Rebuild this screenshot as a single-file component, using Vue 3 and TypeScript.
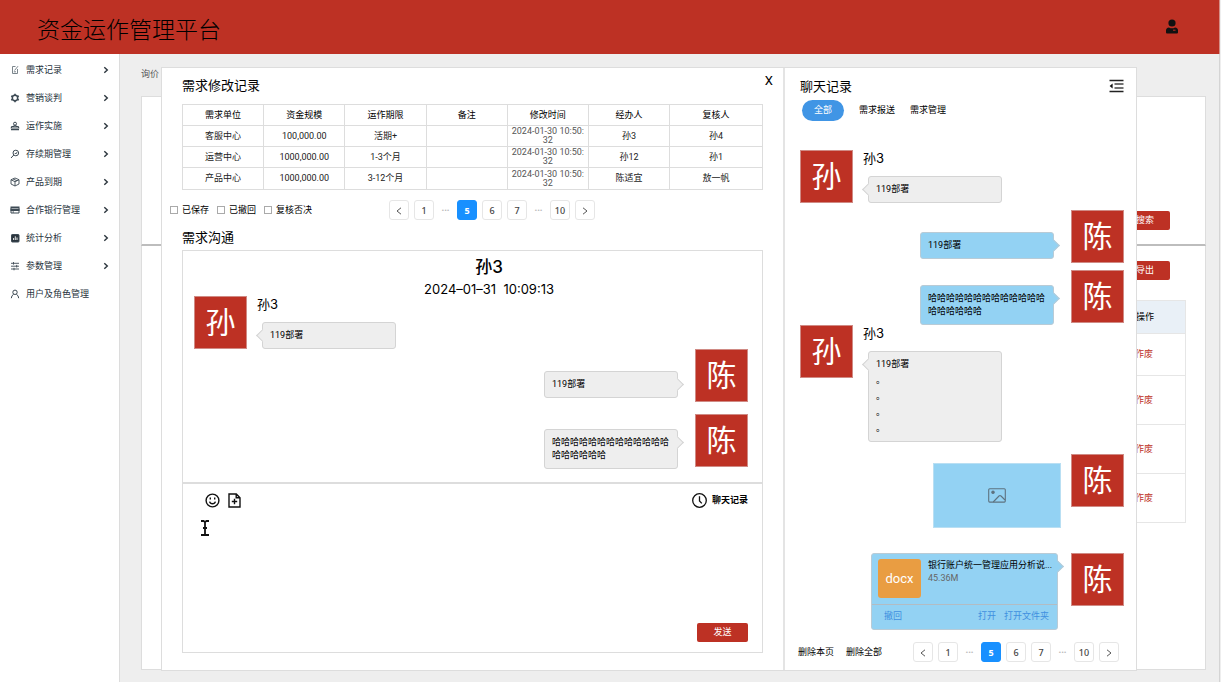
<script setup lang="ts">
import { ref } from 'vue'

interface MenuItem {
  label: string
  icon: string
  expandable: boolean
}

interface RecordRow {
  unit: string
  amount: string
  term: string
  remark: string
  time: string
  operator: string
  reviewer: string
}

interface Message {
  id: number
  kind: 'text' | 'image' | 'file'
  mine: boolean
  author: string
  avatar: string
  lines: string[]
  gap: string
  drop: string
}

const menu: MenuItem[] = [
  { label: '需求记录', icon: 'note', expandable: true },
  { label: '营销谈判', icon: 'gear', expandable: true },
  { label: '运作实施', icon: 'stamp', expandable: true },
  { label: '存续期管理', icon: 'search', expandable: true },
  { label: '产品到期', icon: 'box', expandable: true },
  { label: '合作银行管理', icon: 'card', expandable: true },
  { label: '统计分析', icon: 'chart', expandable: true },
  { label: '参数管理', icon: 'sliders', expandable: true },
  { label: '用户及角色管理', icon: 'user', expandable: false },
]

const columns = ['需求单位', '资金规模', '运作期限', '备注', '修改时间', '经办人', '复核人']

const records: RecordRow[] = [
  { unit: '客服中心', amount: '100,000.00', term: '活期+', remark: '', time: '2024-01-30 10:50:32', operator: '孙3', reviewer: '孙4' },
  { unit: '运营中心', amount: '1000,000.00', term: '1-3个月', remark: '', time: '2024-01-30 10:50:32', operator: '孙12', reviewer: '孙1' },
  { unit: '产品中心', amount: '1000,000.00', term: '3-12个月', remark: '', time: '2024-01-30 10:50:32', operator: '陈适宜', reviewer: '敖一帆' },
]

const filters = ['已保存', '已撤回', '复核否决']
const pages = ['prev', '1', 'dots', '5', '6', '7', 'dots', '10', 'next']
const laugh = '哈'.repeat(19)

const dialog: Message[] = [
  { id: 1, kind: 'text', mine: false, author: '孙3', avatar: '孙', lines: ['119部署'], gap: 'gap-none', drop: 'drop-none' },
  { id: 2, kind: 'text', mine: true, author: '', avatar: '陈', lines: ['119部署'], gap: 'gap-none', drop: 'drop-large' },
  { id: 3, kind: 'text', mine: true, author: '', avatar: '陈', lines: [laugh], gap: 'gap-medium', drop: 'drop-medium' },
]

const history: Message[] = [
  { id: 1, kind: 'text', mine: false, author: '孙3', avatar: '孙', lines: ['119部署'], gap: 'gap-none', drop: 'drop-none' },
  { id: 2, kind: 'text', mine: true, author: '', avatar: '陈', lines: ['119部署'], gap: 'gap-small', drop: 'drop-large' },
  { id: 3, kind: 'text', mine: true, author: '', avatar: '陈', lines: [laugh], gap: 'gap-small', drop: 'drop-medium' },
  { id: 4, kind: 'text', mine: false, author: '孙3', avatar: '孙', lines: ['119部署', '。', '。', '。', '。'], gap: 'gap-none', drop: 'drop-none' },
  { id: 5, kind: 'image', mine: true, author: '', avatar: '陈', lines: [], gap: 'gap-medium', drop: 'drop-small' },
  { id: 6, kind: 'file', mine: true, author: '', avatar: '陈', lines: [], gap: 'gap-large', drop: 'drop-none' },
]

const tabs = ['全部', '需求报送', '需求管理']
const activeTab = ref('全部')
const current = ref('5')
const draft = ref('')
</script>

<template>
  <div class="app">
    <header class="topbar">
      <h1>资金运作管理平台</h1>
      <button class="plain account" aria-label="账户">
        <svg width="14" height="16" viewBox="0 0 14 16">
          <circle cx="7" cy="4" r="3.6" fill="#111" />
          <path d="M1 11.5Q1 8.8 4 8.5Q7 10.2 10 8.5Q13 8.8 13 11.5V13.5Q13 14.5 12 14.5H2Q1 14.5 1 13.5Z" fill="#111" />
          <path d="M8 11.2H10.5" stroke="#bd3124" stroke-width="1" />
        </svg>
      </button>
    </header>

    <div class="body">
      <nav class="sidebar">
        <a v-for="item in menu" :key="item.label" href="#" class="menu-item">
          <svg class="menu-icon" width="10" height="10" viewBox="0 0 10 10" fill="none" stroke="#3d4a54" stroke-width="1">
            <g v-if="item.icon === 'note'" stroke="#7b858c"><path d="M5.5 1.5H2.5V8.5H7.5V4M4.5 5.5L8 1.2M3.8 6.8H6" /></g>
            <g v-else-if="item.icon === 'gear'"><circle cx="5" cy="5" r="2.7" stroke-width="1.5" /><path d="M5 .7V2M5 8V9.3M1.2 2.9L2.3 3.5M7.7 6.5L8.8 7.1M1.2 7.1L2.3 6.5M7.7 3.5L8.8 2.9" stroke-width="1.6" /></g>
            <g v-else-if="item.icon === 'stamp'"><circle cx="5" cy="2.7" r="1.5" /><path d="M4.2 4V5.5H2Q1.3 5.5 1.3 7H8.7Q8.7 5.5 8 5.5H5.8V4M1 8.7H9" stroke-width="1.2" /></g>
            <g v-else-if="item.icon === 'search'"><circle cx="5.8" cy="4" r="2.8" /><path d="M3.8 6L1 9M4.8 4L5.8 5L7 3.2" /></g>
            <g v-else-if="item.icon === 'box'"><path d="M5 1L9 2.7V7L5 9L1 7V2.7ZM1 2.8L5 4.7L9 2.8M5 4.7V9M3 1.9L7 3.8" stroke-width=".9" /></g>
            <g v-else-if="item.icon === 'card'"><path d="M.5 2.5H9.5M.5 5H9.5" stroke-width="1.8" /><path d="M1 3V8H9V3M2.5 7H4" /></g>
            <g v-else-if="item.icon === 'chart'"><rect x="1.5" y="1.5" width="7.5" height="7.5" rx=".7" fill="#2b353d" /><path d="M3.6 7V5M5.3 7V3.3M7 7V4.5" stroke="#fff" stroke-width=".9" /></g>
            <g v-else-if="item.icon === 'sliders'"><path d="M1 2.3H9M1 5.2H9M1 8H9M3.5 1V3.6M6.7 3.9V6.5M4 6.8V9.3" stroke-width=".9" /></g>
            <g v-else><circle cx="5" cy="3.3" r="2.2" /><path d="M1.3 9.2Q1.5 6.3 3.7 5.2M8.7 9.2Q8.5 6.3 6.3 5.2" /></g>
          </svg>
          <span>{{ item.label }}</span>
          <svg v-if="item.expandable" class="chevron" width="6" height="8" viewBox="0 0 6 8"><path d="M1.3 1.2L4.3 4L1.3 6.8" fill="none" stroke="#2b353d" stroke-width="1.4" /></svg>
        </a>
      </nav>

      <main class="main">
        <div class="backdrop">
          <div class="crumb">询价</div>
          <section class="search-card"><button class="primary">搜索</button></section>
          <section class="list-card">
            <button class="primary">导出</button>
            <table class="list-table">
              <thead><tr><th>操作</th></tr></thead>
              <tbody>
                <tr v-for="n in 4" :key="n"><td><a href="#">作废</a></td></tr>
              </tbody>
            </table>
          </section>
        </div>

        <div class="modal">
          <section class="left">
            <div class="left-head">
              <h2>需求修改记录</h2>
              <button class="plain close" aria-label="关闭">X</button>
            </div>

            <table class="records">
              <thead>
                <tr><th v-for="c in columns" :key="c">{{ c }}</th></tr>
              </thead>
              <tbody>
                <tr v-for="r in records" :key="r.unit">
                  <td>{{ r.unit }}</td>
                  <td>{{ r.amount }}</td>
                  <td>{{ r.term }}</td>
                  <td>{{ r.remark }}</td>
                  <td class="time">{{ r.time }}</td>
                  <td>{{ r.operator }}</td>
                  <td>{{ r.reviewer }}</td>
                </tr>
              </tbody>
            </table>

            <div class="filter-row">
              <div class="filters">
                <label v-for="f in filters" :key="f"><input type="checkbox" />{{ f }}</label>
              </div>
              <div class="pager">
                <template v-for="(p, i) in pages" :key="i">
                  <span v-if="p === 'dots'" class="dots">•••</span>
                  <button v-else :class="{ on: p === current }" :aria-label="p">
                    <svg v-if="p === 'prev'" width="8" height="8" viewBox="0 0 8 8"><path d="M6 .8L2 4L6 7.2" /></svg>
                    <svg v-else-if="p === 'next'" width="8" height="8" viewBox="0 0 8 8"><path d="M2 .8L6 4L2 7.2" /></svg>
                    <template v-else>{{ p }}</template>
                  </button>
                </template>
              </div>
            </div>

            <h2 class="talk-title">需求沟通</h2>

            <div class="talk">
              <div class="talk-head">
                <strong>孙3</strong>
                <time>2024–01–31&nbsp; 10:09:13</time>
              </div>
              <div class="messages">
                <div v-for="m in dialog" :key="m.id" class="message" :class="[{ mine: m.mine }, m.gap]">
                  <div class="avatar">{{ m.avatar }}</div>
                  <div class="content" :class="m.drop">
                    <div v-if="m.author" class="author">{{ m.author }}</div>
                    <div class="bubble"><p v-for="(l, i) in m.lines" :key="i">{{ l }}</p></div>
                  </div>
                </div>
              </div>
            </div>

            <div class="editor">
              <div class="tools">
                <button class="plain" aria-label="表情">
                  <svg width="15" height="15" viewBox="0 0 15 15" fill="none" stroke="#111" stroke-width="1.4">
                    <circle cx="7.5" cy="7.5" r="6.4" />
                    <path d="M4.6 8.6Q5.2 10.8 7.5 10.8T10.4 8.6M5.3 4.6V6.4M9.7 4.6V6.4" />
                  </svg>
                </button>
                <button class="plain" aria-label="添加文件">
                  <svg width="13" height="15" viewBox="0 0 13 15" fill="none" stroke="#111" stroke-width="1.4">
                    <path d="M1 1H8.3L12 4.7V14H1ZM8.2 1V4.8H12M6.5 5.8V11.2M3.8 8.5H9.2" />
                  </svg>
                </button>
                <button class="plain history-link">
                  <svg width="15" height="15" viewBox="0 0 15 15" fill="none" stroke="#111" stroke-width="1.3">
                    <circle cx="7.5" cy="7.5" r="6.8" /><path d="M7.5 3.3V8L9.8 10.4" />
                  </svg>
                  聊天记录
                </button>
              </div>
              <div class="draft">
                <svg class="ibeam" width="8" height="16" viewBox="0 0 8 16" fill="none" stroke="#111" stroke-width="1.8"><path d="M0 1H2.5L4 2L5.5 1H8M4 2V14M0 15H2.5L4 14L5.5 15H8M2 8H6" /></svg>
                <textarea v-model="draft" aria-label="消息内容"></textarea>
              </div>
              <button class="primary send">发送</button>
            </div>
          </section>

          <section class="right">
            <div class="right-head">
              <h2>聊天记录</h2>
              <button class="plain" aria-label="收起">
                <svg width="15" height="14" viewBox="0 0 15 14">
                  <path d="M.5 1.5H14.5M.5 12.5H14.5" stroke="#222" stroke-width="1.3" />
                  <path d="M5.5 5H14.5M5.5 9H14.5" stroke="#444" stroke-width="1.3" />
                  <path d="M3.6 4.5V9.5L.6 7Z" fill="#111" />
                </svg>
              </button>
            </div>
            <div class="tabs">
              <button v-for="t in tabs" :key="t" :class="{ on: t === activeTab }" @click="activeTab = t">{{ t }}</button>
            </div>

            <div class="messages blue">
              <div v-for="m in history" :key="m.id" class="message" :class="[{ mine: m.mine }, m.gap]">
                <div class="avatar">{{ m.avatar }}</div>
                <div class="content" :class="[m.drop, m.kind]">
                  <div v-if="m.author" class="author">{{ m.author }}</div>
                  <div v-if="m.kind === 'text'" class="bubble"><p v-for="(l, i) in m.lines" :key="i">{{ l }}</p></div>
                  <div v-else-if="m.kind === 'image'" class="picture">
                    <svg width="18" height="15" viewBox="0 0 18 15" fill="none" stroke="#5e7380" stroke-width="1.1">
                      <rect x=".7" y=".7" width="16.6" height="13.4" rx="1" />
                      <circle cx="5" cy="4.3" r="1.2" fill="#5e7380" />
                      <path d="M5.2 14L11 8Q12 7 13 8L17 12" />
                    </svg>
                  </div>
                  <div v-else class="bubble file-card">
                    <div class="file-top">
                      <div class="doc">docx</div>
                      <div class="file-info">
                        <div class="file-name">银行账户统一管理应用分析说...</div>
                        <div class="file-size">45.36M</div>
                      </div>
                    </div>
                    <div class="file-actions">
                      <a href="#">撤回</a>
                      <a href="#" class="open">打开</a>
                      <a href="#">打开文件夹</a>
                    </div>
                  </div>
                </div>
              </div>
            </div>

            <div class="right-foot">
              <button class="plain">删除本页</button>
              <button class="plain">删除全部</button>
              <div class="pager">
                <template v-for="(p, i) in pages" :key="i">
                  <span v-if="p === 'dots'" class="dots">•••</span>
                  <button v-else :class="{ on: p === current }" :aria-label="p">
                    <svg v-if="p === 'prev'" width="8" height="8" viewBox="0 0 8 8"><path d="M6 .8L2 4L6 7.2" /></svg>
                    <svg v-else-if="p === 'next'" width="8" height="8" viewBox="0 0 8 8"><path d="M2 .8L6 4L2 7.2" /></svg>
                    <template v-else>{{ p }}</template>
                  </button>
                </template>
              </div>
            </div>
          </section>
        </div>
      </main>
    </div>
  </div>
</template>

<style>
body {
  background: #eee;
}
</style>

<style scoped>
* {
  box-sizing: border-box;
}
.app {
  display: flex;
  flex-direction: column;
  min-height: 100vh;
  padding-right: 1px;
  font-family: Roboto, "Noto Sans CJK SC", sans-serif;
  font-size: 9px;
  line-height: 13px;
  color: #000;
}
button {
  font: inherit;
  color: inherit;
  cursor: pointer;
}
h1,
h2,
p {
  margin: 0;
  font-weight: 400;
}
a {
  text-decoration: none;
  color: inherit;
}
svg {
  display: block;
}
.plain {
  padding: 0;
  border: 0;
  background: none;
}
.primary {
  padding: 0;
  border: 0;
  border-radius: 2px;
  background: #bd3124;
  color: #fff;
}
.topbar {
  display: flex;
  align-items: center;
  justify-content: space-between;
  height: 54px;
  padding: 0 40px 0 37px;
  border-right: 1px solid #d58f88;
  background: #bd3124;
}
.topbar h1 {
  padding-top: 8px;
  font-size: 23px;
  line-height: 32px;
  font-weight: 300;
}
.body {
  flex: 1;
  display: flex;
  border-right: 1px solid #d4d4d4;
}
.sidebar {
  flex: none;
  width: 120px;
  padding-top: 2px;
  border-right: 1px solid #dcdcdc;
  background: #fff;
}
.menu-item {
  display: flex;
  align-items: center;
  height: 28px;
  padding: 0 10px;
  color: #26323c;
}
.menu-icon {
  margin-right: 6px;
}
.chevron {
  margin-left: auto;
}
.main {
  position: relative;
  flex: 1;
  display: flex;
  background: #eee;
}
.backdrop {
  flex: 1;
  display: flex;
  flex-direction: column;
  padding: 14px 13px 12px 21px;
}
.crumb {
  height: 28px;
  color: #555;
}
.search-card {
  display: flex;
  align-items: flex-end;
  justify-content: flex-end;
  height: 150px;
  padding: 0 35px 14px;
  border: 1px solid #ddd;
  border-bottom: 2px solid #bdbdbd;
  background: #fff;
}
.search-card .primary,
.list-card .primary {
  width: 50px;
  height: 19px;
}
.list-card {
  flex: 1;
  display: flex;
  flex-direction: column;
  align-items: flex-end;
  padding: 15px 19px 0;
  border: 1px solid #ddd;
  border-top: 0;
  background: #fff;
}
.list-card .primary {
  margin-right: 16px;
}
.list-table {
  width: 100%;
  margin-top: 20px;
  border-collapse: collapse;
  border: 1px solid #e6e6e6;
  text-align: right;
}
.list-table th {
  height: 33px;
  padding: 0 31px;
  background: #e9f0f7;
  font-weight: 400;
}
.list-table td {
  height: 49px;
  padding: 0 32px;
  border-top: 1px solid #e6e6e6;
  color: #bd3124;
}
.list-table tbody tr:first-child td {
  height: 42px;
}
.modal {
  position: absolute;
  top: 13px;
  right: 82px;
  bottom: 11px;
  left: 41px;
  display: flex;
  border: 1px solid #ddd;
  background: #fff;
}
.left {
  flex: 1;
  display: flex;
  flex-direction: column;
  padding: 0 20px 17px;
  border-right: 2px solid #e4e4e4;
}
.left-head {
  display: flex;
  justify-content: space-between;
  height: 36px;
  margin-right: -12px;
}
h2 {
  font-size: 13px;
  line-height: 16px;
}
.left-head h2 {
  padding-top: 10px;
}
.close {
  align-self: flex-start;
  padding: 5px 2px;
  font-size: 13px;
  line-height: 16px;
}
.records {
  width: 100%;
  table-layout: fixed;
  border-collapse: collapse;
  text-align: center;
}
.records th,
.records td {
  height: 21px;
  padding: 0;
  border: 1px solid #ddd;
  font-weight: 400;
  line-height: 9px;
}
.records tr:last-child td {
  height: 22px;
}
.records th:last-child {
  width: 16%;
}
.records td {
  color: #222;
}
.records .time {
  padding: 0 2px;
  word-break: break-all;
  color: #555;
}
.filter-row {
  display: flex;
  align-items: center;
  margin: 10px 0 10px -12px;
}
.filters {
  display: flex;
  gap: 8px;
  width: 219px;
}
.filters label {
  display: flex;
  align-items: center;
  gap: 4px;
}
.filters input {
  appearance: none;
  width: 8px;
  height: 8px;
  margin: 0;
  border: 1px solid #aaa;
  background: #fff;
}
.pager {
  display: flex;
  align-items: center;
  gap: 5px;
}
.pager button {
  display: flex;
  align-items: center;
  justify-content: center;
  width: 20px;
  height: 20px;
  padding: 1px 0 0;
  border: 1px solid #e6e6e6;
  border-radius: 3px;
  background: #fff;
  color: #444;
  font-family: "Noto Sans", sans-serif;
  font-weight: 500;
}
.pager .on {
  border-color: #1890ff;
  background: #1890ff;
  color: #fff;
  font-weight: 700;
}
.pager path {
  fill: none;
  stroke: #555;
}
.dots {
  width: 13px;
  text-align: center;
  color: #bbb;
  font-size: 8px;
}
.talk-title {
  margin-bottom: 4px;
}
.talk {
  min-height: 232px;
  padding: 5px 14px 13px 11px;
  border: 1px solid #ddd;
  border-bottom: 0;
}
.talk-head {
  display: flex;
  flex-direction: column;
  align-items: center;
  padding-left: 36px;
  font-family: Inter, "Noto Sans CJK SC", sans-serif;
}
.talk-head strong {
  font-size: 17px;
  line-height: 22px;
  font-weight: 500;
}
.talk-head time {
  margin-top: 4px;
  font-size: 13px;
  line-height: 14px;
}
.messages {
  display: flex;
  flex-direction: column;
}
.message {
  display: flex;
  align-items: flex-start;
  gap: 10px;
}
.message.mine {
  flex-direction: row-reverse;
  gap: 17px;
}
.gap-small {
  margin-top: 7px;
}
.gap-medium {
  margin-top: 12px;
}
.gap-large {
  margin-top: 25px;
}
.drop-small {
  padding-top: 9px;
}
.drop-medium {
  padding-top: 15px;
}
.drop-large {
  padding-top: 22px;
}
.avatar {
  flex: none;
  width: 53px;
  height: 53px;
  border: 1px solid #d08a84;
  background: #bd3124;
  color: #fff;
  font-size: 30px;
  line-height: 52px;
  text-align: center;
}
.author {
  margin-bottom: 10px;
  font-family: Inter, "Noto Sans CJK SC", sans-serif;
  font-size: 13px;
  line-height: 16px;
}
.bubble {
  position: relative;
  width: 134px;
  padding: 6px 7px;
  border: 1px solid #d4d4d4;
  border-radius: 3px;
  background: #eee;
  overflow-wrap: anywhere;
}
.author + .bubble {
  margin-left: 5px;
}
.bubble p + p {
  margin-top: 3px;
}
.bubble::before {
  content: "";
  position: absolute;
  top: 8px;
  left: -5px;
  width: 8px;
  height: 8px;
  border: 1px solid #d4d4d4;
  border-width: 0 0 1px 1px;
  background: #eee;
  transform: rotate(45deg);
}
.mine .bubble::before {
  right: -5px;
  left: auto;
  border-width: 1px 1px 0 0;
}
.blue .mine .bubble,
.blue .mine .bubble::before {
  border-color: #b9cbd6;
  background: #93d2f3;
}
.editor {
  flex: 1;
  display: flex;
  flex-direction: column;
  padding: 9px 14px 10px 18px;
  border: 1px solid #ddd;
  border-top-width: 2px;
}
.tools {
  display: flex;
  align-items: center;
  gap: 8px;
  padding-left: 4px;
}
.history-link {
  display: flex;
  align-items: center;
  gap: 5px;
  margin-left: auto;
  font-weight: 700;
}
.draft {
  flex: 1;
  display: flex;
  padding-top: 12px;
}
textarea {
  flex: 1;
  border: 0;
  outline: 0;
  resize: none;
  font: inherit;
}
.send {
  align-self: flex-end;
  width: 51px;
  height: 19px;
}
.right {
  flex: none;
  width: 351px;
  display: flex;
  flex-direction: column;
  padding: 11px 12px 8px 15px;
}
.right-head {
  display: flex;
  align-items: flex-start;
  justify-content: space-between;
}
.tabs {
  display: flex;
  gap: 15px;
  margin: 5px 0 29px 2px;
}
.tabs button {
  height: 21px;
  padding: 0;
  border: 0;
  border-radius: 11px;
  background: none;
}
.tabs .on {
  width: 42px;
  background: #4095e5;
  color: #fff;
}
.picture {
  display: flex;
  align-items: center;
  justify-content: center;
  width: 128px;
  height: 65px;
  margin-right: -7px;
  border: 1px solid #b9dff3;
  background: #93d2f3;
}
.file-card {
  width: 187px;
  margin-right: -4px;
  padding: 0;
}
.file-top {
  display: flex;
  gap: 7px;
  height: 51px;
  padding: 5px 0 0 6px;
  border-bottom: 1px solid #b3bcc2;
}
.doc {
  width: 43px;
  height: 39px;
  border-radius: 3px;
  background: #e99d42;
  color: #fff;
  font-size: 13px;
  line-height: 39px;
  text-align: center;
}
.file-name {
  white-space: nowrap;
}
.file-size {
  color: #666;
}
.file-actions {
  display: flex;
  gap: 8px;
  padding: 5px 8px 6px 12px;
  color: #4090e0;
}
.open {
  margin-left: auto;
}
.right-foot {
  display: flex;
  align-items: center;
  gap: 12px;
  margin-top: auto;
  margin-left: -2px;
}
.right-foot .pager {
  margin-left: auto;
  margin-right: 5px;
}
</style>
